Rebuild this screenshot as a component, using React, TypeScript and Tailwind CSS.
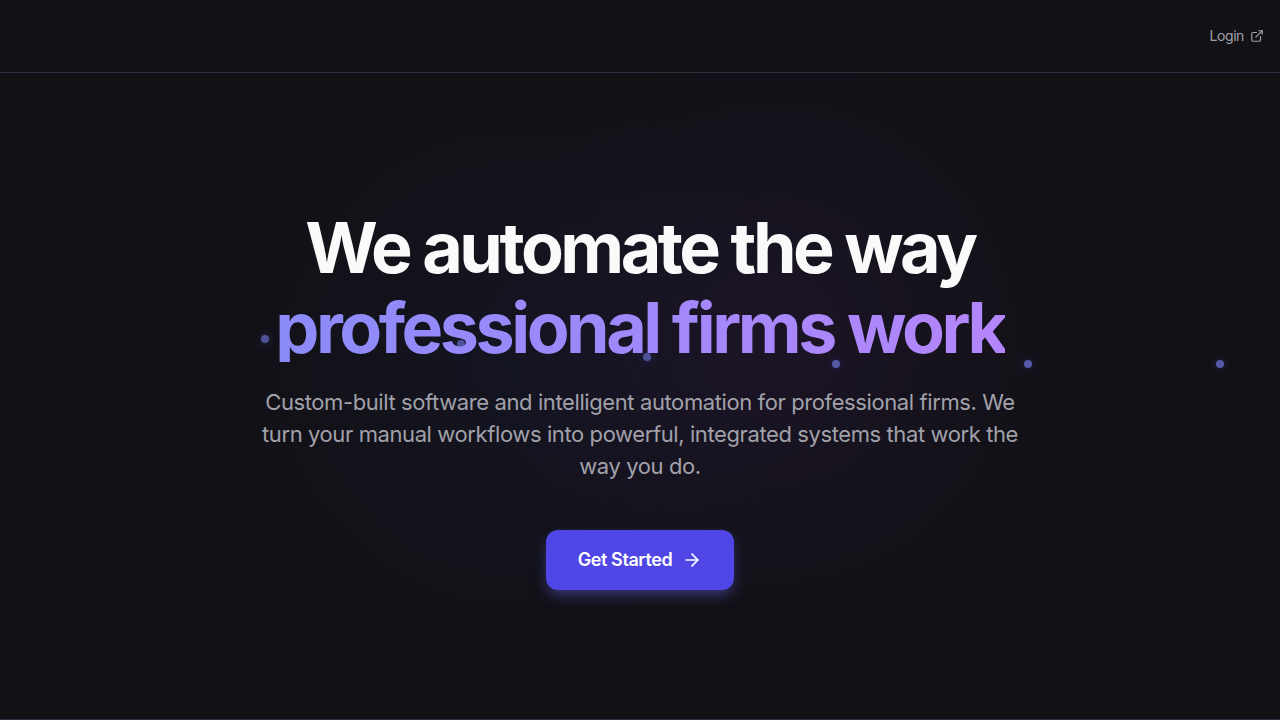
import { ArrowRight, ExternalLink } from "lucide-react";

const particles = [
  { left: "20.4%", top: 262, dim: true },
  { left: "35.7%", top: 267, dim: true },
  { left: "50.2%", top: 280, dim: true },
  { left: "65%", top: 287, dim: false },
  { left: "80%", top: 287, dim: false },
  { left: "95%", top: 287, dim: false },
];

export default function App() {
  return (
    <div className="flex min-h-screen flex-col bg-[#121116] font-['Inter',sans-serif] tracking-tight text-white">
      <header className="flex h-[73px] items-center justify-end border-b border-[#302e40] px-4">
        <a href="#login" className="flex items-center gap-1.5 text-sm text-[#a1a1aa]">
          Login
          <ExternalLink className="size-3.5" />
        </a>
      </header>
      <main className="relative flex flex-1 flex-col items-center overflow-hidden border-b border-[#302e40] px-4 pt-[135px]">
        <div className="pointer-events-none absolute inset-0" aria-hidden="true">
          <div className="absolute -top-1 left-[17%] size-[600px] rounded-full bg-[radial-gradient(circle,#17193366,transparent_68%)]" />
          <div className="absolute -top-8 left-[37%] size-[600px] rounded-full bg-[radial-gradient(circle,#24173580,transparent_68%)]" />
          {particles.map((p) => (
            <span
              key={p.left}
              className={`absolute size-2 rounded-full shadow-[0_0_8px_#6366f14d] ${p.dim ? "bg-[#4c5396]" : "bg-[#5558a5]"}`}
              style={{ left: p.left, top: p.top }}
            />
          ))}
        </div>
        <h1 className="relative text-center text-[70px] leading-[80px] font-bold tracking-tighter text-[#fafafa]">
          We automate the way
          <br />
          <span className="inline-block bg-linear-to-r from-[#8b8bf9] to-[#b485fb] bg-clip-text leading-[68px] text-transparent">professional firms work</span>
        </h1>
        <p className="relative mt-[18px] max-w-3xl text-center text-[22px] leading-8 text-[#a1a1aa]">
          Custom-built software and intelligent automation for professional firms. We turn your manual workflows into powerful, integrated systems that work the way you do.
        </p>
        <button className="relative mt-12 flex h-[60px] items-center gap-2.5 rounded-xl bg-[#4f46e5] px-8 text-lg font-semibold shadow-[0_6px_14px_-2px_#6366f180]">
          Get Started
          <ArrowRight className="size-5" />
        </button>
      </main>
    </div>
  );
}
